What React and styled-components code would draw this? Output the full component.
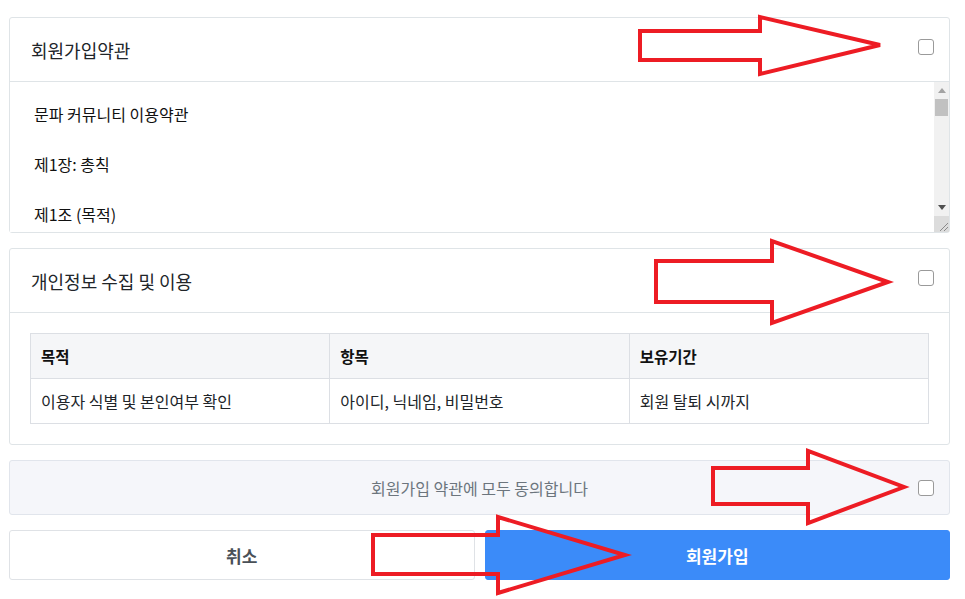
import React from "react";
import styled, { createGlobalStyle } from "styled-components";

const GlobalStyle = createGlobalStyle`
  html, body {
    margin: 0;
    padding: 0;
    background: #ffffff;
  }
  body {
    font-family: "Noto Sans CJK KR", "Noto Sans", "Liberation Sans", sans-serif;
    color: #212529;
  }
`;

const Page = styled.div`
  position: relative;
  box-sizing: border-box;
  width: 965px;
  height: 599px;
  padding: 17px 15px 0 9px;
  display: flex;
  flex-direction: column;
  gap: 15px;
  overflow: hidden;
`;

const Card = styled.section`
  border: 1px solid #dfe4e7;
  border-radius: 3px;
  background: #fff;
  display: flex;
  flex-direction: column;
`;

const CardHeader = styled.header`
  height: 63px;
  display: flex;
  align-items: center;
  justify-content: space-between;
  padding: 0 15px 0 21px;
  border-bottom: 1px solid #dfe4e7;
`;

const Title = styled.h2`
  margin: 0;
  font-size: 18px;
  font-weight: 400;
  line-height: 24px;
  color: #212529;
`;

const Check = styled.input.attrs({ type: "checkbox" })`
  appearance: none;
  margin: 0 0 ${(p) => (p.$raised ? "6px" : "0")};
  width: 16px;
  height: 16px;
  border: 1px solid #9a9a9a;
  border-radius: 3px;
  background: #fff;
  flex-shrink: 0;
`;

// textarea + hand drawn scroll rail (headless screenshots hide native bars)
const TermsBox = styled.div`
  display: flex;
  height: 150px;
`;

const Terms = styled.textarea`
  flex: 1;
  display: block;
  box-sizing: border-box;
  height: 100%;
  margin: 0;
  padding: 20px 24px;
  border: none;
  outline: none;
  resize: none;
  overflow: hidden;
  font-family: inherit;
  font-size: 16px;
  line-height: 25px;
  color: #111;
  background: #fff;
`;

const Rail = styled.div`
  width: 15px;
  display: flex;
  flex-direction: column;
  background: #f1f1f1;
`;

const RailButton = styled.div`
  height: 17px;
  display: flex;
  align-items: center;
  justify-content: center;
`;

const Track = styled.div`
  flex: 1;
  display: flex;
  flex-direction: column;
  align-items: center;
`;

const Thumb = styled.div`
  width: 13px;
  height: 17px;
  background: #c1c1c1;
`;

const Corner = styled.div`
  height: 16px;
  background: #dcdcdc;
  display: flex;
  align-items: flex-end;
  justify-content: flex-end;
`;

const Triangle = ({ up, color }) => (
  <svg width="8" height="5" viewBox="0 0 8 5">
    <polygon points={up ? "0,5 8,5 4,0" : "0,0 8,0 4,5"} fill={color} />
  </svg>
);

const CardBody = styled.div`
  padding: 20px;
`;

const Table = styled.table`
  width: 100%;
  border-collapse: collapse;
  table-layout: fixed;
`;

const Th = styled.th`
  height: 44px;
  padding: 0 10px;
  text-align: left;
  font-size: 15.5px;
  font-weight: 700;
  background: #f5f6f8;
  border: 1px solid #dcdfe4;
  color: #111;
`;

const Td = styled.td`
  height: 44px;
  padding: 0 10px;
  font-size: 16px;
  border: 1px solid #dcdfe4;
  color: #212529;
`;

const AgreeBar = styled.label`
  display: grid;
  grid-template-columns: 1fr auto 1fr;
  align-items: center;
  height: 53px;
  padding: 0 15px;
  border: 1px solid #e1e5ec;
  border-radius: 3px;
  background: #f5f6fa;
`;

const AgreeText = styled.span`
  grid-column: 2;
  font-size: 16px;
  color: #6c757d;
`;

const AgreeCheck = styled(Check)`
  grid-column: 3;
  justify-self: end;
`;

const Buttons = styled.div`
  display: grid;
  grid-template-columns: 1fr 1fr;
  gap: 10px;
`;

const Button = styled.button`
  height: 50px;
  border-radius: 3px;
  font-family: inherit;
  font-size: 17px;
  font-weight: 700;
  cursor: pointer;
  border: 1px solid ${(p) => (p.$primary ? "#3b8bf9" : "#dfe2e6")};
  background: ${(p) => (p.$primary ? "#3b8bf9" : "#fff")};
  color: ${(p) => (p.$primary ? "#fff" : "#495057")};
`;

const Overlay = styled.svg`
  position: absolute;
  top: 0;
  left: 0;
  pointer-events: none;
`;

const termsText = [
  "문파 커뮤니티 이용약관",
  "",
  "제1장: 총칙",
  "",
  "제1조 (목적)",
  "",
  "이 약관은 문파 커뮤니티(이하 \"커뮤니티\")가 제공하는 서비스의 이용과 관련하여",
  "커뮤니티와 회원 간의 권리, 의무 및 책임사항을 규정함을 목적으로 합니다.",
  "",
  "제2조 (정의)",
  "",
  "1. \"서비스\"란 커뮤니티가 제공하는 모든 온라인 서비스를 의미합니다.",
  "2. \"회원\"이란 이 약관에 동의하고 가입한 이용자를 말합니다.",
  "",
  "제3조 (약관의 효력 및 변경)",
  "",
  "1. 이 약관은 서비스 화면에 게시함으로써 효력이 발생합니다.",
  "2. 커뮤니티는 관련 법령을 위배하지 않는 범위에서 약관을 변경할 수 있습니다.",
].join("\n");

const arrows = [
  "640,31 760,31 760,17 880,45 760,74 760,60 640,60",
  "656,261 772,261 772,241 888,282 772,323 772,302 656,302",
  "713,468 808,468 808,451 904,487 808,523 808,504 713,504",
  "373,535 498,535 498,517 625,555 498,593 498,574 373,574",
];

export default function App() {
  return (
    <>
      <GlobalStyle />
      <Page>
        <Card>
          <CardHeader>
            <Title>회원가입약관</Title>
            <Check $raised />
          </CardHeader>
          <TermsBox>
            <Terms readOnly value={termsText} />
            <Rail>
              <RailButton>
                <Triangle up color="#a3a3a3" />
              </RailButton>
              <Track>
                <Thumb />
              </Track>
              <RailButton>
                <Triangle color="#505050" />
              </RailButton>
              <Corner>
                <svg width="12" height="12" viewBox="0 0 12 12">
                  <path d="M11 3 L3 11 M11 7 L7 11" stroke="#8a8a8a" strokeWidth="1" />
                </svg>
              </Corner>
            </Rail>
          </TermsBox>
        </Card>

        <Card>
          <CardHeader>
            <Title>개인정보 수집 및 이용</Title>
            <Check $raised />
          </CardHeader>
          <CardBody>
            <Table>
              <thead>
                <tr>
                  <Th>목적</Th>
                  <Th>항목</Th>
                  <Th>보유기간</Th>
                </tr>
              </thead>
              <tbody>
                <tr>
                  <Td>이용자 식별 및 본인여부 확인</Td>
                  <Td>아이디, 닉네임, 비밀번호</Td>
                  <Td>회원 탈퇴 시까지</Td>
                </tr>
              </tbody>
            </Table>
          </CardBody>
        </Card>

        <AgreeBar>
          <AgreeText>회원가입 약관에 모두 동의합니다</AgreeText>
          <AgreeCheck />
        </AgreeBar>

        <Buttons>
          <Button type="button">취소</Button>
          <Button type="button" $primary>
            회원가입
          </Button>
        </Buttons>

        <Overlay width="965" height="599" viewBox="0 0 965 599">
          {arrows.map((pts, i) => (
            <polygon
              key={i}
              points={pts}
              fill="none"
              stroke="#ed1c24"
              strokeWidth="4"
              strokeLinejoin="miter"
            />
          ))}
        </Overlay>
      </Page>
    </>
  );
}
